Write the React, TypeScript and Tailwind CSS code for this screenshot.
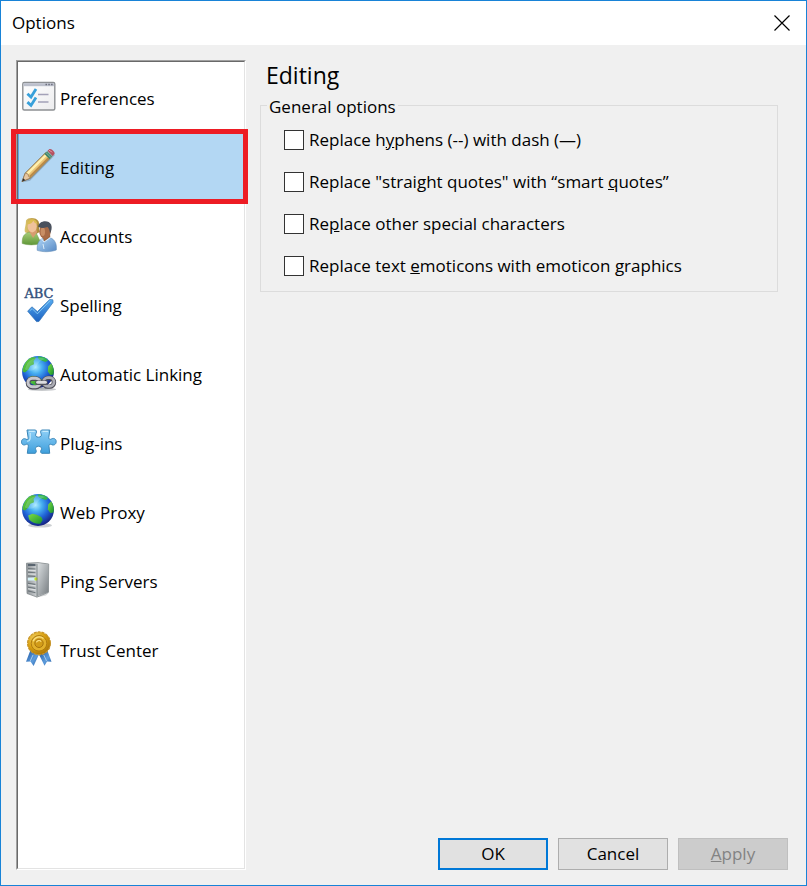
import { useState } from "react";
import type { ReactNode } from "react";

function PreferencesIcon() {
  return (
    <svg viewBox="0 0 36 36" className="size-9 shrink-0" aria-hidden="true">
      <defs>
        <linearGradient id="sheet" x1="0" y1="0" x2="1" y2="1">
          <stop offset="0" stopColor="#ffffff" />
          <stop offset="1" stopColor="#ececee" />
        </linearGradient>
      </defs>
      <rect x="1.8" y="3.5" width="32" height="27.5" rx="1.5" fill="url(#sheet)" stroke="#8d9093" strokeWidth="1.4" />
      <rect x="2.5" y="4.2" width="30.6" height="3" fill="#bcc0cc" />
      <path d="M24.5 5.5h1.5M27.3 5.5h1.5M30.1 5.5h1.5" stroke="#6b6d7c" strokeWidth="1.6" />
      <path d="M17 15.5h10.5M17 23h10.5" stroke="#a3a1b8" strokeWidth="1.5" />
      <path d="M6.4 14.8l3.6 3.3 5-8M6.4 23.1l3.6 3.3 5-8" fill="none" stroke="#38a0da" strokeWidth="2.8" />
    </svg>
  );
}

function PencilIcon() {
  return (
    <svg viewBox="0 0 36 36" className="size-9 shrink-0" aria-hidden="true">
      <path d="M2 34.3l7-1.5L34 7l-2.5-1.5z" fill="#6d8499" opacity=".5" />
      <path d="M1 33.5l3.3-8.4L24.8 4.5l5 5L9.5 30z" fill="#ecc475" stroke="#80693f" strokeWidth=".9" />
      <path d="M5.4 25L24.5 5.9l1.6 1.6L7 26.7z" fill="#fff0ad" />
      <path d="M8.2 28.1L27.7 8.6l1.4 1.1L9.5 29.4z" fill="#b98a48" />
      <path d="M1 33.5l3.3-8.4 2.8 1 .5 2.4 1.9 1.5z" fill="#e5c6a0" stroke="#8a6b4c" strokeWidth=".6" />
      <path d="M1 33.5l1.3-3.2 2 2z" fill="#252a30" />
      <path d="M23.4 5.9l2.9-2.9 5.2 5.1-3 3z" fill="#3d846a" />
      <path d="M24.8 4.4l5.2 5.2M26 3.2l5.2 5.2" stroke="#a5c6b5" strokeWidth=".8" />
      <path d="M26.5 2.8l2-1.7c1.7-1 6 3 5 5l-1.9 2z" fill="#b65060" />
      <path d="M28 2.2c1.1.3 2.2 1.1 3 2.2" stroke="#e9a3a8" fill="none" />
    </svg>
  );
}

function AccountsIcon() {
  return (
    <svg viewBox="0 0 36 36" className="size-9 shrink-0" aria-hidden="true">
      <defs>
        <linearGradient id="greenShirt" x1="0" y1="0" x2="0" y2="1">
          <stop offset="0" stopColor="#a9cd77" />
          <stop offset="1" stopColor="#5f9738" />
        </linearGradient>
        <linearGradient id="blueShirt" x1="0" y1="0" x2="1" y2="1">
          <stop offset="0" stopColor="#b2d7f7" />
          <stop offset="1" stopColor="#5689c4" />
        </linearGradient>
        <linearGradient id="blonde" x1="0" y1="0" x2="1" y2="0">
          <stop offset="0" stopColor="#dcc46c" />
          <stop offset="1" stopColor="#a98637" />
        </linearGradient>
      </defs>
      <path d="M5 3.5C7-.1 15.5.2 17.6 4.5c1.4 3.7-.2 6.8 1 10.4l-5 3-9.3-2.5C2.5 13 5 9 5 3.5z" fill="url(#blonde)" />
      <path d="M1.2 26.5c-.2-6.8 1.8-9.7 6.5-11.2h7.1l5.5 11.2c-6 1.9-14.5 1.8-19.1 0z" fill="url(#greenShirt)" stroke="#739c52" strokeWidth=".5" />
      <path d="M8 14l4.1 7 4.1-6-1.6-4H9.4z" fill="#d79c70" />
      <ellipse cx="11.2" cy="9.2" rx="4.6" ry="6.2" fill="#f0c29a" />
      <path d="M6.3 7.4c3.3-.4 5.2-1.9 6.1-4 .7 2.1 2.1 3.2 4 3.5-.5-5-8-7-10.1 0z" fill="#dcbd51" />
      <path d="M16.2 33.3c-.4-7.4 2.2-11 7-12.5h6.2c4.4 1.8 6.6 6 5.9 12.2-5.7 2.1-13.5 2.3-19.1.3z" fill="url(#blueShirt)" stroke="#638db7" strokeWidth=".6" />
      <path d="M21.4 19l1.8 5.8 6.1-5-.4-4z" fill="#a0653f" />
      <path d="M20 21.5l3 3.5 7-4.7M22 27l1 5" stroke="#dbecf9" strokeWidth="1" fill="none" />
      <ellipse cx="24" cy="14.3" rx="5.8" ry="7.4" fill="#a86b47" />
      <ellipse cx="21.8" cy="14.8" rx="2.2" ry="4.3" fill="#c98f66" />
      <path d="M17.2 10c.2-6.5 10.5-7.9 13-2.3 1.1 3.2.2 6-1.2 8.7-.4-3.2-1.1-5-2.5-6.3-3 1.1-6 1-9.3-.1z" fill="#4a515d" />
    </svg>
  );
}

function SpellingIcon() {
  return (
    <svg viewBox="0 0 36 36" className="size-9 shrink-0 overflow-visible" aria-hidden="true">
      <defs>
        <linearGradient id="tick" x1="0" y1="0" x2="0" y2="1">
          <stop offset="0" stopColor="#55aaf0" />
          <stop offset="1" stopColor="#1c62c2" />
        </linearGradient>
      </defs>
      <text x="18" y="12" textAnchor="middle" fontFamily="DejaVu Serif, serif" fontSize="13" fill="#33507c" stroke="#33507c" strokeWidth=".4">ABC</text>
      <path d="M6.6 25.2l4.3-4.4 5.5 4.8L28.7 13.4l3.2.4 .2 2.6L18 35.4l-2.4.3z" fill="url(#tick)" stroke="#3b79b8" strokeWidth=".7" />
      <path d="M8.7 24.8l2.5-2.2 5.2 5.2L29 14.8" fill="none" stroke="#83c6f1" strokeWidth="1" />
    </svg>
  );
}

function GlobeShape() {
  return (
    <>
      <defs>
        <radialGradient id="ocean" cx=".43" cy=".35" r=".67">
          <stop offset="0" stopColor="#a6eaff" />
          <stop offset=".3" stopColor="#46aef0" />
          <stop offset=".62" stopColor="#1f62d6" />
          <stop offset="1" stopColor="#141f7c" />
        </radialGradient>
        <linearGradient id="land" x1="0" y1="0" x2="1" y2="1">
          <stop offset="0" stopColor="#7fdc45" />
          <stop offset="1" stopColor="#14922c" />
        </linearGradient>
      </defs>
      <ellipse cx="19" cy="32.4" rx="12" ry="2.2" fill="#a3a8ad" opacity=".55" />
      <circle cx="17" cy="17" r="15.9" fill="url(#ocean)" />
      <path d="M1.6 14.5C3 8.5 6.5 4 11 2.3l4.2.2-2.6 3.4.4 3.4-3.6 1.5-2.2 4-3.2 2.6-2.2-.7z" fill="url(#land)" />
      <path d="M17.5 1.2l6.3 1.3 3.4 2.8-2.6 1.6-2.8-1-3-.8-1.9-2z" fill="#35b54e" />
      <path d="M27.2 11.5l2.9-3.2c2.4 3.4 3.3 7.4 2.3 11.3l-3 .4-2.6-3.4z" fill="url(#land)" />
      <path d="M7.2 22.5l4.2-1.7 4.2.9 4.7 2.2 1.4 3-2.4 3.9c-4.3.4-8-1-11-4z" fill="url(#land)" />
      <path d="M6.3 8.5C10 3 18 1.5 24.3 4.1c-4.2 1-7.4 3.5-9.1 8.1-1.6 3.8-7.5 4.6-11.3 2.1z" fill="#dffbff" opacity=".2" />
    </>
  );
}

function LinkIcon() {
  return (
    <svg viewBox="0 0 36 36" className="size-9 shrink-0" aria-hidden="true">
      <GlobeShape />
      <ellipse cx="21" cy="34.4" rx="14" ry="1.5" fill="#858991" opacity=".45" />
      <g fill="none">
        <rect x="7" y="23.6" width="12" height="8.6" rx="4.3" stroke="#4c4c56" strokeWidth="4.6" />
        <rect x="22.5" y="23" width="10.5" height="8.6" rx="4.3" stroke="#4c4c56" strokeWidth="4.4" />
        <rect x="7" y="23.2" width="12" height="8.6" rx="4.3" stroke="#c6c7cd" strokeWidth="3" />
        <rect x="22.5" y="22.7" width="10.5" height="8.6" rx="4.3" stroke="#acadb5" strokeWidth="2.8" />
        <path d="M16.5 27.8h8" stroke="#55555e" strokeWidth="4.6" strokeLinecap="round" />
        <path d="M16.5 27.3h8" stroke="#dcdce0" strokeWidth="2.8" strokeLinecap="round" />
      </g>
    </svg>
  );
}

function PluginIcon() {
  return (
    <svg viewBox="0 0 36 36" className="size-9 shrink-0" aria-hidden="true">
      <defs>
        <linearGradient id="puzzle" x1="0" y1="0" x2="0" y2="1">
          <stop offset="0" stopColor="#8fd0f7" />
          <stop offset="1" stopColor="#3f9fdc" />
        </linearGradient>
      </defs>
      <path d="M6 6h8.6c1.3 1 1.1 2.6.3 3.8-1 2 .3 3.4 2.6 3.4s3.5-1.5 2.6-3.4c-.8-1.5-.7-2.9.4-3.8h8.3l-1 7.4c.2 1.8 1 2.5 2.5 1.6 1.6-1.2 4.9-.6 4.9 2.5 0 3.3-3 4.2-4.8 3-1.8-.8-2.6.2-2.4 1.9l.7 6.9h-8.1c-1.5-1-1.1-2.6-.3-3.5.9-2-.5-3.6-2.8-3.6s-3.7 1.7-2.7 3.5c.7 1.3.8 2.8-.7 3.6H6.3l1-7c.1-2-.7-2.9-2.5-1.8C3 21.6.4 20.8.5 17.8c.1-2.8 2.6-3.8 4.4-2.7 1.6 1 2.5.4 2.2-1.5z" fill="url(#puzzle)" stroke="#3a86b8" strokeWidth="1" strokeLinejoin="round" />
      <path d="M8 7.4h5.8M21.4 7.4h5.7M9.2 9v5.2c-.2 2.1-1.2 3-3.2 3" fill="none" stroke="#c7ebfc" strokeWidth="1.1" />
    </svg>
  );
}

function GlobeIcon() {
  return (
    <svg viewBox="0 0 36 36" className="size-9 shrink-0" aria-hidden="true">
      <GlobeShape />
    </svg>
  );
}

function ServerIcon() {
  return (
    <svg viewBox="0 0 36 36" className="size-9 shrink-0" aria-hidden="true">
      <defs>
        <linearGradient id="serverFront" x1="0" y1="0" x2="1" y2="0">
          <stop offset="0" stopColor="#8f9498" />
          <stop offset=".6" stopColor="#dde0e2" />
          <stop offset="1" stopColor="#a0a5a8" />
        </linearGradient>
        <linearGradient id="serverSide" x1="0" y1="0" x2="1" y2="1">
          <stop offset="0" stopColor="#dce0e2" />
          <stop offset="1" stopColor="#777d81" />
        </linearGradient>
      </defs>
      <path d="M15 34.5l13-4-3 3-10 2z" fill="#aeb1b3" opacity=".5" />
      <path d="M5.5 1.2L17 .6 27.7 2l-.3 28.3L16 35.1 6 31.5z" fill="url(#serverFront)" stroke="#777e81" strokeWidth=".7" />
      <path d="M16 2L27.4 2v28.1L16 34.6z" fill="url(#serverSide)" />
      <path d="M7 3h7.5" stroke="#5a6570" strokeWidth="2" />
      <path d="M7 6.6l7.5.4M7 10.3l7.5.4M7 14l7.5.4M7 21.4l7.5 1M7 25.2l7.5 1.2M7 28.9l7.5 1.8" stroke="#6d767b" strokeWidth="1.1" />
      <path d="M7 8.2l7.5.3M7 12l7.5.3M7 22.8l7.5 1M7 26.7l7.5 1.2" stroke="#dce0e1" strokeWidth="1.1" />
      <path d="M6.8 15.7h8.4v2.9H6.8z" fill="#d4f0f7" />
      <circle cx="15" cy="17" r="1.7" fill="#c5e22a" />
      <path d="M16 2v32.5" stroke="#6b7376" strokeWidth=".8" />
    </svg>
  );
}

function AwardIcon() {
  return (
    <svg viewBox="0 0 36 36" className="size-9 shrink-0" aria-hidden="true">
      <defs>
        <radialGradient id="medal" cx=".35" cy=".3" r=".75">
          <stop offset="0" stopColor="#f2d264" />
          <stop offset=".55" stopColor="#d9a010" />
          <stop offset="1" stopColor="#a87408" />
        </radialGradient>
        <linearGradient id="ribbon" x1="0" y1="0" x2="1" y2="1">
          <stop offset="0" stopColor="#1e559f" />
          <stop offset=".6" stopColor="#5d9cdc" />
          <stop offset="1" stopColor="#245ca4" />
        </linearGradient>
      </defs>
      <path d="M9.5 19L5 30.8l4.5-.3 3.1 4.5L17.7 24z" fill="url(#ribbon)" />
      <path d="M26.2 19l4.3 11.8-4.5-.2-2.5 4.2L18.2 24z" fill="url(#ribbon)" />
      <path d="M12 24l-3 6.5M22.8 24l2.8 6" stroke="#a3c9ec" />
      <circle cx="18" cy="12.3" r="11.4" fill="url(#medal)" stroke="#c8952a" strokeWidth="1.2" strokeDasharray="3 1" />
      <circle cx="18" cy="12.3" r="7.8" fill="#e2b12b" stroke="#b07c10" />
      <circle cx="18" cy="12.3" r="4.2" fill="#d29c18" stroke="#a8740e" />
      <path d="M12.2 10.3c1.4-4.4 6.8-5.8 10.3-2.8M15.4 11.4c.5-1.9 3.3-2.7 4.8-.8" fill="none" stroke="#fbe084" strokeWidth="1.2" />
    </svg>
  );
}

const sections: { name: string; icon: ReactNode }[] = [
  { name: "Preferences", icon: <PreferencesIcon /> },
  { name: "Editing", icon: <PencilIcon /> },
  { name: "Accounts", icon: <AccountsIcon /> },
  { name: "Spelling", icon: <SpellingIcon /> },
  { name: "Automatic Linking", icon: <LinkIcon /> },
  { name: "Plug-ins", icon: <PluginIcon /> },
  { name: "Web Proxy", icon: <GlobeIcon /> },
  { name: "Ping Servers", icon: <ServerIcon /> },
  { name: "Trust Center", icon: <AwardIcon /> },
];

const options: { id: string; label: ReactNode }[] = [
  { id: "hyphens", label: <>Replace h<u>y</u>phens (--) with dash (—)</> },
  { id: "quotes", label: <>Replace "straight quotes" with “smart <u>q</u>uotes”</> },
  { id: "special", label: <>Re<u>p</u>lace other special characters</> },
  { id: "emoticons", label: <>Replace text <u>e</u>moticons with emoticon graphics</> },
];

export default function App() {
  const [selected, setSelected] = useState("Editing");

  return (
    <div className="flex min-h-screen flex-col border border-[#1883d7] bg-[#f0f0f0] font-['Segoe_UI','Open_Sans',sans-serif] text-[17px] leading-6 text-black">
      <header className="flex h-11 shrink-0 items-center justify-between bg-white pr-4 pl-[11px]">
        <h1>Options</h1>
        <button type="button" aria-label="Close">
          <svg viewBox="0 0 16 16" className="size-4" aria-hidden="true">
            <path d="M.5.5l15 15M15.5.5l-15 15" stroke="#000" strokeWidth="1.2" />
          </svg>
        </button>
      </header>

      <div className="flex grow gap-[14px] p-[15px]">
        <nav className="w-[230px] shrink-0 border border-t-[#a0a0a0] border-r-white border-b-white border-l-[#a0a0a0]">
          <ul className="h-full border border-t-[#696969] border-r-[#e3e3e3] border-b-[#e3e3e3] border-l-[#696969] bg-white">
            {sections.map(({ name, icon }) => (
              <li key={name} className="relative">
                <button
                  type="button"
                  onClick={() => setSelected(name)}
                  className={
                    selected === name
                      ? "flex h-[69px] w-full items-center gap-[3px] border-l border-[#5ea9e4] bg-[#b3d7f3] pl-[2px] text-left"
                      : "flex h-[69px] w-full items-center gap-[3px] pl-[3px] text-left"
                  }
                >
                  {icon}
                  <span className="pt-[5px]">{name}</span>
                </button>
                {selected === name && (
                  <span className="pointer-events-none absolute -top-[2px] -right-1 -bottom-1 -left-[7px] z-10 border-5 border-[#ed1c24]" />
                )}
              </li>
            ))}
          </ul>
        </nav>

        <div className="flex grow flex-col">
          <main className="grow pr-[13px]">
            <h2 className="pl-[6px] text-[23px] leading-[30px]">Editing</h2>
            <fieldset className="mt-px border border-[#dcdcdc] px-[23px] pb-[13px]">
              <legend className="-ml-[17px] px-[2px] pt-1">General options</legend>
              <div className="flex flex-col gap-[18px] pt-[9px]">
                {options.map(({ id, label }) => (
                  <div key={id} className="flex items-center gap-[5px]">
                    <input
                      id={id}
                      type="checkbox"
                      className="size-5 shrink-0 appearance-none border border-[#333333] bg-white checked:bg-[#0078d7]"
                    />
                    <label htmlFor={id}>{label}</label>
                  </div>
                ))}
              </div>
            </fieldset>
          </main>
          <footer className="flex justify-end gap-[10px] pr-[3px]">
            <button type="button" className="h-8 w-[110px] border-2 border-[#0078d7] bg-[#e1e1e1]">OK</button>
            <button type="button" className="h-8 w-[110px] border border-[#adadad] bg-[#e1e1e1]">Cancel</button>
            <button type="button" disabled className="h-8 w-[110px] border border-[#bfbfbf] bg-[#cccccc] text-[#838383]">
              <u>A</u>pply
            </button>
          </footer>
        </div>
      </div>
    </div>
  );
}
